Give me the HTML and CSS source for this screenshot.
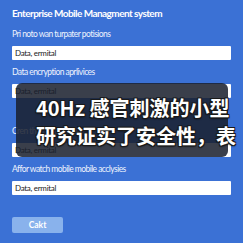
FILE: index.html
```html
<!DOCTYPE html>
<html>
<head>
<meta charset="utf-8">
<link rel="stylesheet" href="styles.css">
</head>
<body>
<div class="page">
  <h1 class="title">Enterprise Mobile Managment system</h1>
  <div class="field">
    <label class="label">Pri noto wan turpater potisions</label>
    <div class="input">Data, ermital</div>
  </div>
  <div class="field">
    <label class="label">Data encryption aprlivices</label>
    <div class="input">Data, ermital</div>
  </div>
  <div class="field gap">
    <label class="label">Cren this marnectivies</label>
    <div class="input">Data, ermital</div>
  </div>
  <div class="field">
    <label class="label">Affor watch mobile mobile acclysies</label>
    <div class="input">Data, ermital</div>
  </div>
  <button class="btn">Cakt</button>
</div>
<div class="caption">
  <div class="cap-text">40Hz 感官刺激的小型<br>研究证实了安全性，表</div>
</div>
</body>
</html>
```
FILE: styles.css
```css
html, body {
  margin: 0;
  padding: 0;
  width: 243px;
  height: 243px;
  overflow: hidden;
  background: #3b71d5;
  font-family: Lato, "Open Sans", sans-serif;
}
.page {
  padding: 6px 12px 0 12px;
  display: flex;
  flex-direction: column;
}
.title {
  margin: 0 0 2px 0;
  font-size: 10px;
  font-weight: 700;
  color: #ffffff;
  line-height: 14px;
  letter-spacing: -0.55px;
}
.field {
  display: flex;
  flex-direction: column;
  margin-top: 6px;
}
.field.gap {
  margin-top: 27px;
}
.label {
  font-size: 8.5px;
  color: #eef3fd;
  line-height: 12px;
  margin-bottom: 6px;
  letter-spacing: -0.55px;
}
.input {
  background: #ffffff;
  height: 14px;
  border-radius: 1px;
  font-size: 8px;
  line-height: 14px;
  color: #222;
  padding-left: 3px;
  letter-spacing: -0.3px;
}
.btn {
  margin-top: 22px;
  width: 51px;
  height: 16px;
  border: none;
  border-radius: 2px;
  background: #89b2ec;
  color: #ffffff;
  font-family: Lato, "Open Sans", sans-serif;
  font-size: 8.5px;
  font-weight: 700;
  padding: 0;
}
.caption {
  position: absolute;
  left: 16px;
  top: 83px;
  width: 212px;
  height: 74px;
  border-radius: 6px;
  background: rgba(26, 32, 45, 0.86);
}
.cap-text {
  position: absolute;
  left: 20px;
  top: 11px;
  white-space: nowrap;
  font-family: "Noto Sans CJK SC", "Noto Sans", sans-serif;
  font-weight: 700;
  font-size: 20px;
  line-height: 28px;
  color: #ffffff;
  text-shadow: -1px -1px 0 #1a1a1a, 1px -1px 0 #1a1a1a, -1px 1px 0 #1a1a1a, 1px 1px 0 #1a1a1a, 0 1px 2px #000;
}
```
